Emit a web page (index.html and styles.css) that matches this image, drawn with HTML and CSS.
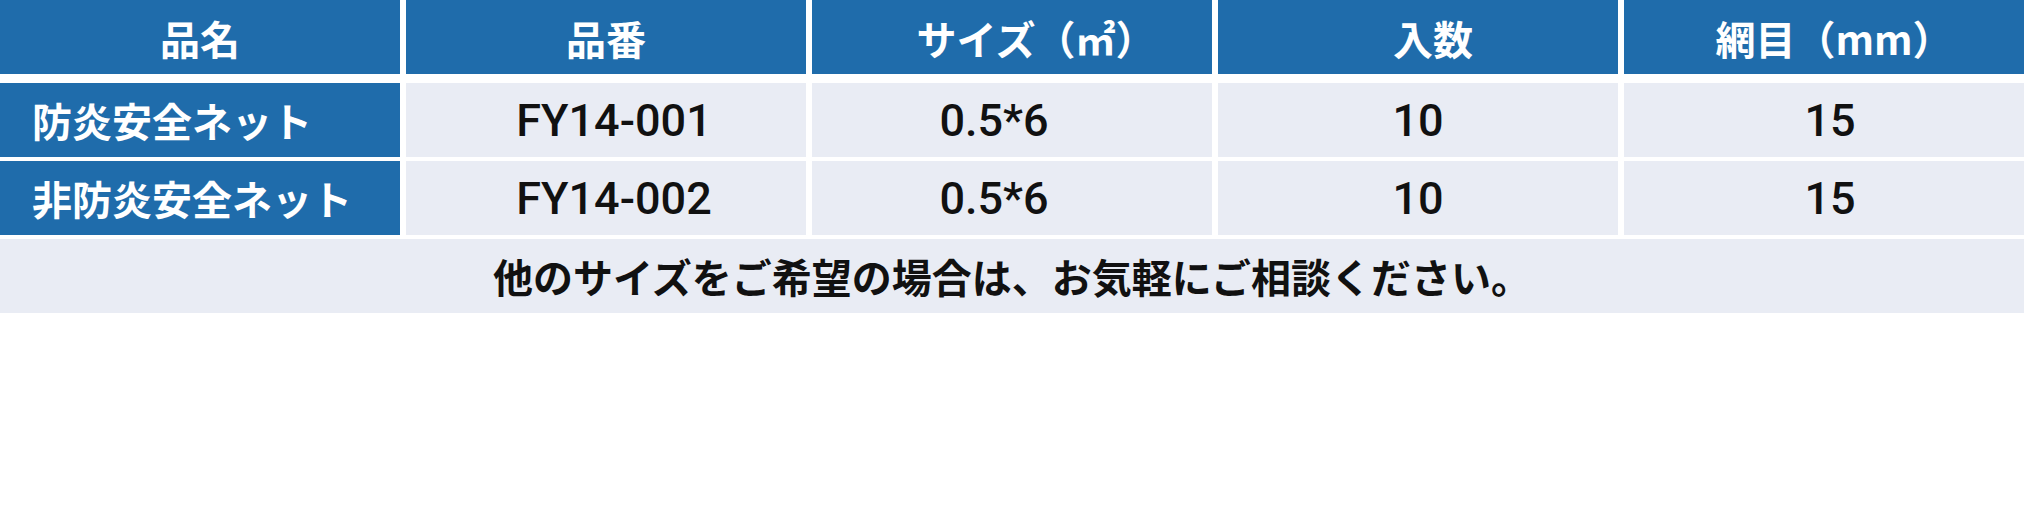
FILE: index.html
```html
<!DOCTYPE html>
<html lang="ja">
<head>
<meta charset="utf-8">
<title>防炎安全ネット</title>
<link rel="stylesheet" href="styles.css">
</head>
<body>
<div class="spec">
  <div class="row head">
    <div class="cell th">品名</div>
    <div class="cell th">品番</div>
    <div class="cell th th-size">サイズ（㎡）</div>
    <div class="cell th th-qty">入数</div>
    <div class="cell th th-mesh">網目（mm）</div>
  </div>
  <div class="row">
    <div class="cell name">防炎安全ネット</div>
    <div class="cell val v-code">FY14-001</div>
    <div class="cell val v-size">0.5*6</div>
    <div class="cell val">10</div>
    <div class="cell val v-mesh">15</div>
  </div>
  <div class="row">
    <div class="cell name">非防炎安全ネット</div>
    <div class="cell val v-code">FY14-002</div>
    <div class="cell val v-size">0.5*6</div>
    <div class="cell val">10</div>
    <div class="cell val v-mesh">15</div>
  </div>
  <div class="note">他のサイズをご希望の場合は、お気軽にご相談ください。</div>
</div>
</body>
</html>
```
FILE: styles.css
```css
html, body {
  margin: 0;
  padding: 0;
  background: #ffffff;
}
body {
  font-family: "Noto Sans CJK JP", "Noto Sans", sans-serif;
}
.spec {
  display: flex;
  flex-direction: column;
  gap: 4px;
  width: 2024px;
}
.row {
  display: grid;
  grid-template-columns: repeat(5, 1fr);
  column-gap: 6px;
  height: 74px;
}
.row.head {
  margin-bottom: 5px;
}
.cell {
  display: flex;
  align-items: center;
  justify-content: center;
  background: #e9ecf4;
  color: #111111;
}
.th {
  background: #1f6cab;
  color: #ffffff;
  font-weight: 700;
  font-size: 40px;
  padding-top: 2px;
}
.th-size {
  padding-left: 48px;
}
.th-qty {
  padding-left: 30px;
}
.th-mesh {
  padding-left: 20px;
}
.name {
  background: #1f6cab;
  color: #ffffff;
  font-weight: 700;
  font-size: 40px;
  justify-content: flex-start;
  padding-left: 32px;
}
.val {
  font-family: Roboto, "Noto Sans CJK JP", sans-serif;
  font-weight: 500;
  font-size: 45px;
}
.v-code {
  padding-left: 16px;
}
.v-size {
  padding-right: 36px;
}
.v-mesh {
  padding-left: 12px;
}
.note {
  height: 74px;
  display: flex;
  align-items: center;
  justify-content: center;
  background: #e9ecf4;
  color: #111111;
  font-weight: 700;
  font-size: 40px;
}
```
